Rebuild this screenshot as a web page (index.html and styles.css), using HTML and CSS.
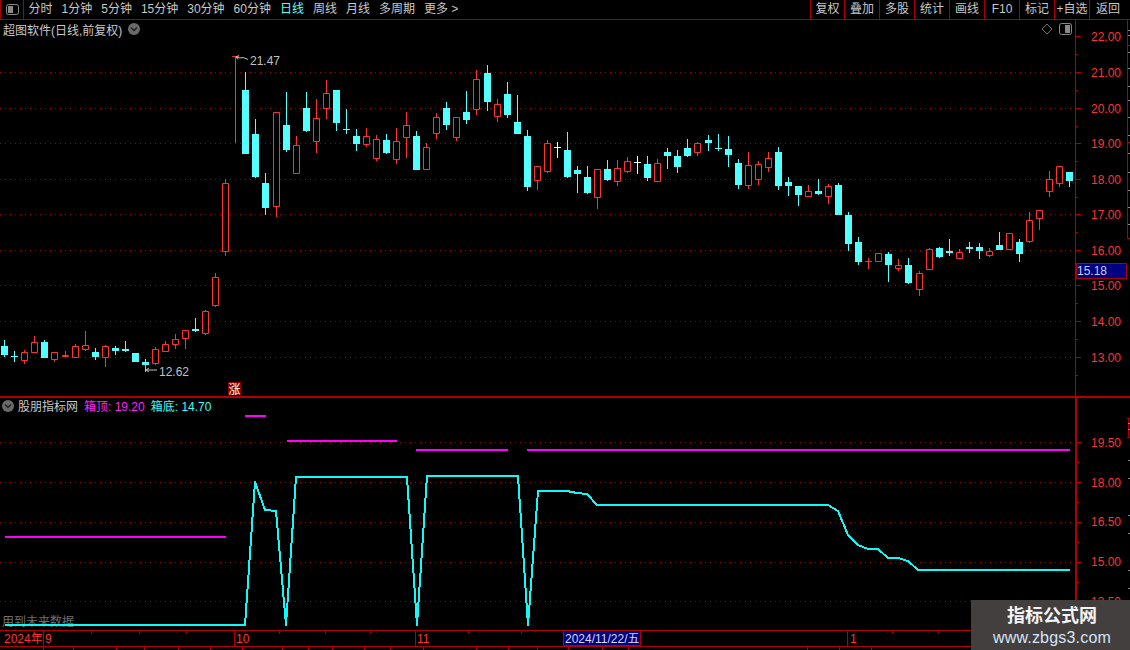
FILE: index.html
```html
<!DOCTYPE html>
<html lang="zh">
<head>
<meta charset="utf-8">
<title>超图软件</title>
<link rel="stylesheet" href="styles.css">
</head>
<body>
<div class="app">
  <header class="toolbar">
    <div class="panel-toggle">
      <svg class="toggle-icon" viewBox="0 0 13 11" width="13" height="11"><rect class="toggle-frame" x=".5" y=".5" width="12" height="10" rx="2"/><rect class="toggle-fill" x="2" y="2" width="5" height="7"/></svg>
    </div>
    <nav class="periods">
      <span class="period">分时</span><span class="period">1分钟</span><span class="period">5分钟</span><span class="period">15分钟</span><span class="period">30分钟</span><span class="period">60分钟</span><span class="period active">日线</span><span class="period">周线</span><span class="period">月线</span><span class="period">多周期</span><span class="period">更多 &gt;</span>
    </nav>
    <div class="actions">
      <span class="action">复权</span><span class="action">叠加</span><span class="action">多股</span><span class="action">统计</span><span class="action">画线</span><span class="action">F10</span><span class="action">标记</span><span class="action">+自选</span><span class="action">返回</span>
    </div>
  </header>

  <section class="pane pane-main">
    <div class="plot">
      <div class="pane-head">
        <span class="pane-title">超图软件(日线,前复权)</span>
        <svg class="chev" viewBox="0 0 12 12" width="12" height="12"><circle class="chev-bg" cx="6" cy="6" r="6"/><path class="chev-mark" d="M3 4.5l3 3 3-3"/></svg>
        <span class="head-spacer"></span>
        <svg class="head-icons" viewBox="0 0 34 12" width="34" height="12"><path class="diamond" d="M9 1l5 5-5 5-5-5z"/><rect class="toggle-frame" x="21.5" y=".5" width="12" height="11" rx="2"/><rect class="toggle-fill" x="27" y="2" width="5" height="8"/></svg>
      </div>
      <svg class="canvas canvas-main" viewBox="0 38 1075 358" width="1075" height="358">
        <path class="grid" d="M0 72.5H1075M0 108.5H1075M0 143.5H1075M0 179.5H1075M0 214.5H1075M0 250.5H1075M0 285.5H1075M0 321.5H1075M0 357.5H1075"/>
        <path id="wick-c" class="wick-c"/>
        <path id="wick-r" class="wick-r"/>
        <path id="wick-w" class="wick-w"/>
        <path id="body-c" class="body-c"/>
        <path id="body-r" class="body-r"/>
        <path id="body-w" class="body-w"/>
        <path class="marker" d="M236 57l3-1.500M236 57l2 2.500M236 57l4 1 3 -.5 5 2M145.500 364V372M146 370H157M146 370l3-2M146 370l3 2"/>
        <text class="mark-label" x="250" y="65">21.47</text>
        <text class="mark-label" x="159" y="376">12.62</text>
        <rect class="badge" x="228" y="382" width="13" height="13"/>
        <text class="badge-text" x="228.500" y="393.500">涨</text>
      </svg>
    </div>
    <svg class="canvas axis" viewBox="1075 20 55 376" width="55" height="376">
      <path class="axis-line" d="M1075.500 20V396M1127.500 20V239"/>
      <path class="axis-line" d="M1075 36.500h6M1075 72.500h6M1075 108.500h6M1075 143.500h6M1075 179.500h6M1075 214.500h6M1075 250.500h6M1075 285.500h6M1075 321.500h6M1075 357.500h6M1075 54.500h3M1075 90.500h3M1075 126.500h3M1075 161.500h3M1075 197.500h3M1075 232.500h3M1075 268.500h3M1075 303.500h3M1075 339.500h3M1075 375.500h3M1127 45.500h3M1127 142.500h3M1127 238.500h3"/>
      <path class="side-ticks" d="M1128 30.500h2M1128 35.500h2M1128 52.500h2M1128 68.500h2M1128 86.500h2M1128 100.500h2M1128 117.500h2M1128 135.500h2M1128 153.500h2M1128 172.500h2M1128 190.500h2M1128 207.500h2M1128 224.500h2"/>
      <text class="axis-label" x="1091" y="41">22.00</text>
      <text class="axis-label" x="1091" y="77">21.00</text>
      <text class="axis-label" x="1091" y="113">20.00</text>
      <text class="axis-label" x="1091" y="148">19.00</text>
      <text class="axis-label" x="1091" y="184">18.00</text>
      <text class="axis-label" x="1091" y="219">17.00</text>
      <text class="axis-label" x="1091" y="255">16.00</text>
      <text class="axis-label" x="1091" y="290">15.00</text>
      <text class="axis-label" x="1091" y="326">14.00</text>
      <text class="axis-label" x="1091" y="362">13.00</text>
      <rect class="price-box" x="1076.500" y="263.500" width="50" height="15"/>
      <text class="price-text" x="1077" y="275">15.18</text>
    </svg>
  </section>

  <section class="pane pane-sub">
    <div class="plot">
      <div class="pane-head sub-head">
        <svg class="chev" viewBox="0 0 12 12" width="12" height="12"><circle class="chev-bg" cx="6" cy="6" r="6"/><path class="chev-mark" d="M3 4.500l3 3 3-3"/></svg>
        <span class="pane-title">股朋指标网</span>
        <span class="legend legend-top">箱顶: 19.20</span>
        <span class="legend legend-bottom">箱底: 14.70</span>
      </div>
      <svg class="canvas canvas-sub" viewBox="0 413 1075 217" width="1075" height="217">
        <path class="grid" d="M0 442.500H1075M0 482.500H1075M0 522.500H1075M0 562.500H1075M0 601.500H1075"/>
        <text class="future-note" x="2" y="626">用到未来数据</text>
        <path class="box-line" d="M5 537H226M245 416H266M287 441H397M416 450H508M527 450H1070"/>
        <polyline class="signal" points="5,625 245,625 255,482 265,510 276,511 286,625 296,477 407,477 417,625 427,476 518,476 528,625 538,491 567,491 577,493 587,494 597,505 828,505 838,511 848,535 858,545 868,549 878,549 888,558 898,558 908,561 918,570 1070,570"/>
      </svg>
    </div>
    <svg class="canvas axis" viewBox="1075 398 55 232" width="55" height="232">
      <path class="axis-thick" d="M1076 398V630"/>
      <path class="axis-line" d="M1077 442.500h5M1077 482.500h5M1077 522.500h5M1077 562.500h5M1077 601.500h5M1077 462.500h2M1077 502.500h2M1077 542.500h2M1077 582.500h2M1127 418.500h3M1127 437.500h3M1128.500 418V437"/>
      <path class="side-ticks" d="M1128 423.500h2M1128 429.500h2M1128 460.500h2M1128 478.500h2M1128 515.500h2M1128 533.500h2M1128 570.500h2M1128 588.500h2"/>
      <text class="axis-label" x="1091" y="447">19.50</text>
      <text class="axis-label" x="1091" y="487">18.00</text>
      <text class="axis-label" x="1091" y="526">16.50</text>
      <text class="axis-label" x="1091" y="566">15.00</text>
      <text class="axis-label" x="1091" y="606">13.50</text>
    </svg>
  </section>

  <svg class="canvas timebar" viewBox="0 630 1130 20" width="1130" height="20">
    <path class="axis-line" d="M0 630.500H1130M0 646.500H1130M43.500 630V650M234.500 630V646M415.500 630V646M847.500 630V646M91.500 631v3M139.500 631v3M186.500 631v3M279.500 631v3M325.500 631v3M370.500 631v3M468.500 631v3M521.500 631v3M892.500 631v3M938.500 631v3"/>
    <path class="axis-line" d="M73.500 646V650M116.500 646V650M144.500 646V650M178.500 646V650M210.500 646V650M242.500 646V650M282.500 646V650M308.500 646V650M332.500 646V650M364.500 646V650M390.500 646V650M423.500 646V650M476.500 646V650M508.500 646V650M537.500 646V650M568.500 646V650M602.500 646V650M628.500 646V650M807.500 646V650M839.500 646V650M871.500 646V650"/>
    <text class="time-label" x="4" y="643">2024年</text>
    <text class="time-label" x="45" y="643">9</text>
    <text class="time-label" x="236" y="643">10</text>
    <text class="time-label" x="417" y="643">11</text>
    <text class="time-label" x="850" y="643">1</text>
    <rect class="cursor-box" x="563.500" y="630.500" width="77" height="15"/>
    <text class="cursor-text" x="565" y="643">2024/11/22/五</text>
  </svg>

  <aside class="watermark">
    <strong class="wm-title">指标公式网</strong>
    <span class="wm-url">www.zbgs3.com</span>
  </aside>
</div>
<script src="chart.js"></script>
</body>
</html>
```

FILE: styles.css
```css
* { box-sizing: border-box; }
html, body { margin: 0; padding: 0; background: #000; }
body {
  width: 1130px;
  height: 650px;
  overflow: hidden;
  font-family: "Liberation Sans", "Noto Sans CJK SC", sans-serif;
  font-size: 12px;
  color: #c8c8c8;
}
.app { position: relative; width: 1130px; height: 650px; display: flex; flex-direction: column; overflow: hidden; }

.toolbar { height: 20px; flex: none; display: flex; border-bottom: 1px solid #a80000; line-height: 18px; }
.panel-toggle { width: 24px; flex: none; display: flex; align-items: center; padding-left: 5px; padding-bottom: 1px; border-left: 1px solid #a80000; border-right: 1px solid #a80000; }
.toggle-icon { display: block; }
.toggle-frame { fill: none; stroke: #8a8a8a; }
.toggle-fill { fill: #8a8a8a; }
.periods { display: flex; flex: 1; padding-left: 0; }
.period { padding: 0 4.5px; white-space: nowrap; }
.period.active { color: #54ffff; }
.actions { display: flex; flex: none; width: 320px; }
.action { width: 35px; text-align: center; border-left: 1px solid #a80000; white-space: nowrap; }
.action:first-child { width: 34px; }
.action:last-child { width: 41px; padding-right: 4px; }

.pane { display: flex; flex: none; }
.pane-main { height: 378px; border-bottom: 2px solid #b00000; }
.pane-sub { height: 232px; }
.plot { width: 1075px; flex: none; display: flex; flex-direction: column; }
.pane-head { display: flex; align-items: center; height: 18px; flex: none; padding: 0 3px 0 3px; white-space: nowrap; }
.pane-main .chev { margin-left: 6px; }
.head-spacer { flex: 1; }
.head-icons { margin-right: 0; }
.sub-head { height: 15px; padding-left: 2px; }
.sub-head .pane-title { margin: 0 6px 0 4px; }
.legend { margin-right: 6px; }
.legend-top { color: #ff22ff; }
.legend-bottom { color: #33ffff; }
.chev { flex: none; display: block; }
.chev-bg { fill: #6a6a6a; }
.chev-mark { fill: none; stroke: #1c1c1c; stroke-width: 1.300; }
.diamond { fill: none; stroke: #707070; }

.canvas { display: block; flex: none; }
.canvas text { font-family: "Liberation Sans", "Noto Sans CJK SC", sans-serif; font-size: 12px; }
.grid { fill: none; stroke: #a00000; stroke-width: 1; stroke-dasharray: 1 4; }
.wick-c { fill: none; stroke: #54ffff; }
.wick-r { fill: none; stroke: #ff3232; }
.wick-w { fill: none; stroke: #fff; }
.body-c { fill: #54ffff; }
.body-r { fill: #000; stroke: #ff3232; }
.body-w { fill: #fff; }
.marker { fill: none; stroke: #c0c0c0; }
.mark-label { fill: #c0c0c0; }
.badge { fill: #8a0000; }
.canvas .badge-text { fill: #fff; font-size: 12px; }

.axis-line { fill: none; stroke: #b00000; }
.axis-thick { fill: none; stroke: #b00000; stroke-width: 2; }
.side-ticks { fill: none; stroke: #8a8a8a; }
.axis-label { fill: #ff3232; }
.price-box { fill: #000080; stroke: #b00000; }
.price-text { fill: #c8d0f0; }

.future-note { fill: #6e6e6e; }
.box-line { fill: none; stroke: #ff00ff; stroke-width: 2; }
.signal { fill: none; stroke: #10fafa; stroke-width: 2; stroke-linejoin: round; shape-rendering: crispEdges; }

.timebar { flex: none; }
.time-label { fill: #ff3232; }
.cursor-box { fill: #000080; stroke: #b00000; }
.cursor-text { fill: #d8d8e8; }

.watermark {
  position: absolute;
  right: 0;
  bottom: 0;
  width: 159px;
  height: 50px;
  background: #433f3e;
  display: flex;
  flex-direction: column;
  align-items: center;
  padding: 5px 0 0 3px;
  gap: 2px;
}
.wm-title { font-size: 18px; line-height: 22px; font-weight: 700; color: #f4f4f4; }
.wm-url { font-size: 16px; line-height: 18px; letter-spacing: .2px; color: #d4e4f8; }
```

FILE: chart.js
```js
// kind, x, high, body top, body bottom, low
var candles = [
  ["c",4,340,346,355,357],["c",14,351,356,356,362],["r",24,350,352,360,364],["r",34,336,342,352,352],
  ["c",44,340,342,358,358],["r",54,352,352,359,362],["r",65,351,355,356,357],["r",75,344,346,357,357],
  ["r",85,331,345,349,351],["c",95,348,352,357,360],["r",105,345,346,357,367],["c",115,346,348,351,355],
  ["c",125,341,349,351,352],["c",135,353,353,362,362],["c",145,359,362,365,372],["r",155,347,349,363,365],
  ["r",165,341,344,351,351],["r",175,334,339,344,349],["r",185,330,330,338,349],["c",195,318,329,331,332],
  ["r",205,310,311,333,335],["r",215,273,277,305,307],["r",225,179,183,251,256],["r",235,56,56,56,143],
  ["c",245,72,90,154,154],["c",255,119,134,177,178],["c",265,173,183,208,215],["r",276,112,112,206,217],
  ["c",286,92,125,150,152],["r",296,136,145,173,173],["c",306,92,108,131,132],["r",316,99,118,141,153],
  ["r",326,80,93,108,119],["c",336,90,90,123,131],["c",346,109,129,129,134],["c",356,129,136,144,151],
  ["r",366,128,136,144,147],["r",376,135,139,158,161],["c",386,134,140,153,154],["r",396,128,141,159,164],
  ["r",406,112,125,137,158],["c",416,131,136,170,170],["r",426,143,147,169,170],["r",436,113,117,133,139],
  ["c",446,102,108,125,130],["r",456,117,117,137,141],["c",466,91,112,120,124],["r",476,70,79,109,115],
  ["c",487,65,73,102,111],["r",497,99,104,116,122],["c",507,82,94,115,118],["c",517,95,122,134,134],
  ["c",527,130,136,187,191],["r",537,166,166,180,190],["r",547,140,143,171,173],["w",557,142,147,147,158],
  ["c",567,132,150,177,178],["c",577,166,170,174,193],["c",587,166,177,193,194],["r",597,169,169,197,209],
  ["c",607,160,169,180,181],["r",617,160,168,181,186],["r",627,157,161,171,173],["w",637,156,162,162,174],
  ["c",647,156,164,178,181],["r",657,159,163,181,182],["c",667,148,152,156,169],["c",677,150,156,167,173],
  ["c",687,139,148,156,157],["r",697,142,143,152,156],["c",708,135,140,143,151],["c",718,134,148,148,151],
  ["c",728,136,149,155,167],["c",738,159,163,185,189],["r",748,152,165,185,189],["r",758,161,164,179,185],
  ["r",768,152,158,167,172],["c",778,147,152,186,190],["c",788,177,182,186,196],["c",798,186,186,195,206],
  ["r",808,185,191,196,196],["c",818,179,191,194,195],["r",828,184,186,196,204],["c",838,183,185,215,215],
  ["c",848,212,215,244,251],["c",858,237,242,262,265],["r",868,258,261,261,269],["r",878,253,253,261,262],
  ["c",888,252,254,265,282],["r",898,259,265,268,271],["c",908,258,265,283,284],["r",919,271,273,289,296],
  ["r",929,248,249,269,270],["c",939,247,248,257,258],["c",949,239,251,253,256],["r",959,249,252,258,259],
  ["c",969,242,247,249,253],["c",979,243,247,251,259],["r",989,248,251,255,257],["c",999,232,245,250,250],
  ["r",1009,233,233,249,249],["c",1019,239,242,254,262],["r",1029,212,220,241,243],["r",1039,210,210,218,230],
  ["r",1049,171,179,191,197],["r",1059,166,166,183,187],["c",1069,172,172,181,187]
];

var wicks = { c: "", r: "", w: "" };
var bodies = { c: "", r: "", w: "" };

candles.forEach(function (d) {
  var kind = d[0], x = d[1], hi = d[2], top = d[3], bot = d[4], lo = d[5];
  wicks[kind] += "M" + (x + 0.5) + " " + hi + "V" + lo;
  if (kind === "r") {
    bodies.r += "M" + (x - 2.5) + " " + (top + 0.5) + "h6v" + (bot - top) + "h-6z";
  } else {
    bodies[kind] += "M" + (x - 3) + " " + top + "h7v" + Math.max(bot - top, 1) + "h-7z";
  }
});

["c", "r", "w"].forEach(function (k) {
  document.getElementById("wick-" + k).setAttribute("d", wicks[k]);
  document.getElementById("body-" + k).setAttribute("d", bodies[k]);
});
```
